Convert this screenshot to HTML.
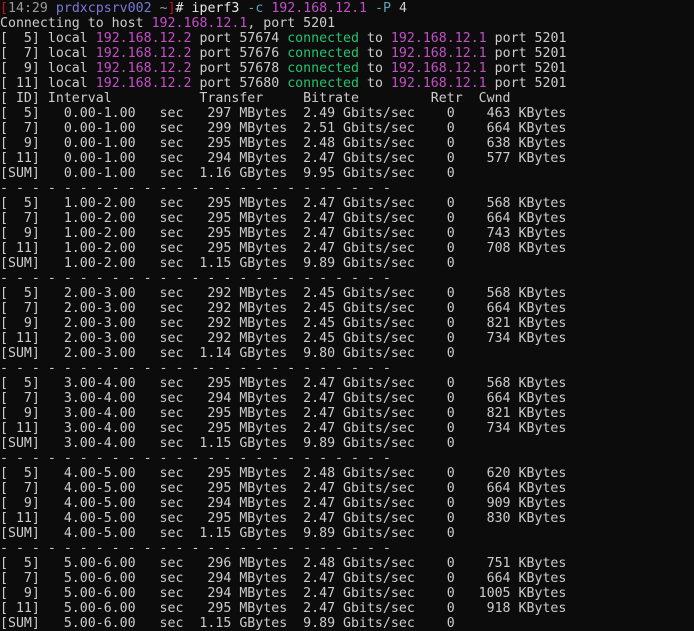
<!DOCTYPE html>
<html><head><meta charset="utf-8"><style>
html,body{margin:0;padding:0;background:#0c0c0c;width:694px;height:627px;overflow:hidden}
pre{margin:0;padding:0;position:absolute;left:0;top:1px;font-family:"DejaVu Sans Mono","Liberation Mono",monospace;font-size:13.25px;line-height:15px;color:#cccccc;white-space:pre}
.r{color:#c50f1f}.g{color:#9a9a9a}.b{color:#7a78d8}.m{color:#c44fc8}.c{color:#23c46e}.t{color:#5fa3b8}.w{color:#e8e8e8}
</style></head><body><pre><span class="r">[</span><span class="g">14:29</span> <span class="b">prdxcpsrv002</span> <span class="g">~</span><span class="r">]</span><span class="w"># iperf3</span> <span class="t">-c</span> <span class="m">192.168.12.1</span> <span class="t">-P</span> 4
Connecting to host <span class="m">192.168.12.1</span>, port 5201
[  5] local <span class="m">192.168.12.2</span> port 57674 <span class="c">connected</span> to <span class="m">192.168.12.1</span> port 5201
[  7] local <span class="m">192.168.12.2</span> port 57676 <span class="c">connected</span> to <span class="m">192.168.12.1</span> port 5201
[  9] local <span class="m">192.168.12.2</span> port 57678 <span class="c">connected</span> to <span class="m">192.168.12.1</span> port 5201
[ 11] local <span class="m">192.168.12.2</span> port 57680 <span class="c">connected</span> to <span class="m">192.168.12.1</span> port 5201
[ ID] Interval           Transfer     Bitrate         Retr  Cwnd
[  5]   0.00-1.00   sec   297 MBytes  2.49 Gbits/sec    0    463 KBytes
[  7]   0.00-1.00   sec   299 MBytes  2.51 Gbits/sec    0    664 KBytes
[  9]   0.00-1.00   sec   295 MBytes  2.48 Gbits/sec    0    638 KBytes
[ 11]   0.00-1.00   sec   294 MBytes  2.47 Gbits/sec    0    577 KBytes
[SUM]   0.00-1.00   sec  1.16 GBytes  9.95 Gbits/sec    0
- - - - - - - - - - - - - - - - - - - - - - - - -
[  5]   1.00-2.00   sec   295 MBytes  2.47 Gbits/sec    0    568 KBytes
[  7]   1.00-2.00   sec   295 MBytes  2.47 Gbits/sec    0    664 KBytes
[  9]   1.00-2.00   sec   295 MBytes  2.47 Gbits/sec    0    743 KBytes
[ 11]   1.00-2.00   sec   295 MBytes  2.47 Gbits/sec    0    708 KBytes
[SUM]   1.00-2.00   sec  1.15 GBytes  9.89 Gbits/sec    0
- - - - - - - - - - - - - - - - - - - - - - - - -
[  5]   2.00-3.00   sec   292 MBytes  2.45 Gbits/sec    0    568 KBytes
[  7]   2.00-3.00   sec   292 MBytes  2.45 Gbits/sec    0    664 KBytes
[  9]   2.00-3.00   sec   292 MBytes  2.45 Gbits/sec    0    821 KBytes
[ 11]   2.00-3.00   sec   292 MBytes  2.45 Gbits/sec    0    734 KBytes
[SUM]   2.00-3.00   sec  1.14 GBytes  9.80 Gbits/sec    0
- - - - - - - - - - - - - - - - - - - - - - - - -
[  5]   3.00-4.00   sec   295 MBytes  2.47 Gbits/sec    0    568 KBytes
[  7]   3.00-4.00   sec   294 MBytes  2.47 Gbits/sec    0    664 KBytes
[  9]   3.00-4.00   sec   295 MBytes  2.47 Gbits/sec    0    821 KBytes
[ 11]   3.00-4.00   sec   295 MBytes  2.47 Gbits/sec    0    734 KBytes
[SUM]   3.00-4.00   sec  1.15 GBytes  9.89 Gbits/sec    0
- - - - - - - - - - - - - - - - - - - - - - - - -
[  5]   4.00-5.00   sec   295 MBytes  2.48 Gbits/sec    0    620 KBytes
[  7]   4.00-5.00   sec   295 MBytes  2.47 Gbits/sec    0    664 KBytes
[  9]   4.00-5.00   sec   294 MBytes  2.47 Gbits/sec    0    909 KBytes
[ 11]   4.00-5.00   sec   295 MBytes  2.47 Gbits/sec    0    830 KBytes
[SUM]   4.00-5.00   sec  1.15 GBytes  9.89 Gbits/sec    0
- - - - - - - - - - - - - - - - - - - - - - - - -
[  5]   5.00-6.00   sec   296 MBytes  2.48 Gbits/sec    0    751 KBytes
[  7]   5.00-6.00   sec   294 MBytes  2.47 Gbits/sec    0    664 KBytes
[  9]   5.00-6.00   sec   294 MBytes  2.47 Gbits/sec    0   1005 KBytes
[ 11]   5.00-6.00   sec   295 MBytes  2.47 Gbits/sec    0    918 KBytes
[SUM]   5.00-6.00   sec  1.15 GBytes  9.89 Gbits/sec    0
</pre></body></html>
